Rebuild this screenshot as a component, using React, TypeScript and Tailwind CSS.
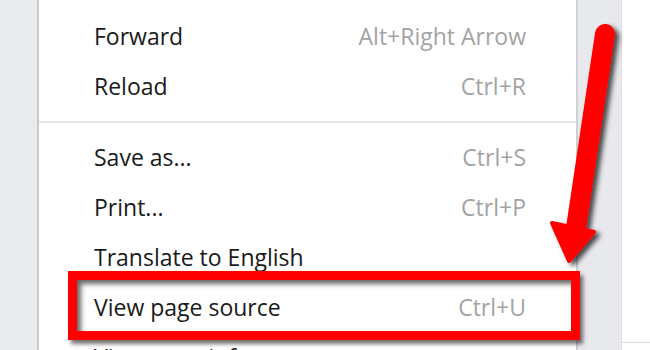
import React from 'react';

const items = [
  { label: 'Forward', shortcut: 'Alt+Right Arrow' },
  { label: 'Reload', shortcut: 'Ctrl+R' },
  { sep: true },
  { label: 'Save as...', shortcut: 'Ctrl+S' },
  { label: 'Print...', shortcut: 'Ctrl+P' },
  { label: 'Translate to English', shortcut: '' },
  { label: 'View page source', shortcut: 'Ctrl+U' },
  { label: 'View page info', shortcut: '' },
];

const App = () => {
  return (
    <div
      className="relative w-[650px] h-[350px] overflow-hidden flex bg-white"
      style={{ fontFamily: '"Open Sans", "Noto Sans", sans-serif' }}
    >
      {/* page behind the menu, left side */}
      <div className="w-[39px] shrink-0 bg-[#e9eaee] border-r-2 border-[#c9c9cc]" />

      {/* context menu */}
      <div className="w-[539px] shrink-0 bg-white border-r-2 border-[#cfd0d3] pt-[11px]">
        {items.map((item, i) =>
          item.sep ? (
            <div key={i} className="h-[21px] flex items-center">
              <div className="w-full h-[2px] bg-[#e6e6e6]" />
            </div>
          ) : (
            <div key={i} className="h-[50px] flex items-center justify-between pl-[55px] pr-[50px] text-[23px]">
              <span className="text-[#1a1a1a]">{item.label}</span>
              <span className="text-[#a3a3a3]">{item.shortcut}</span>
            </div>
          )
        )}
      </div>

      {/* page behind the menu, right side */}
      <div className="w-[44px] shrink-0 bg-[#e8e9ed] border-r border-[#dcdde0]" />
      <div className="flex-1 flex flex-col bg-white">
        <div className="h-[342px]" />
        <div className="h-px bg-[#dcdde0]" />
      </div>

      {/* highlight box */}
      <div className="absolute left-[68px] top-[271px] w-[512px] h-[69px] border-[9px] border-[#ff0000] shadow-[3px_4px_4px_rgba(0,0,0,0.55),inset_4px_4px_5px_rgba(0,0,0,0.6)]" />

      {/* arrow */}
      <svg className="absolute left-0 top-0" width="650" height="350" viewBox="0 0 650 350">
        <defs>
          <filter id="sh" x="-50%" y="-20%" width="200%" height="140%">
            <feDropShadow dx="4" dy="3" stdDeviation="2.5" floodColor="#000" floodOpacity="0.7" />
          </filter>
        </defs>
        <g filter="url(#sh)" fill="#ff0000" stroke="#ff0000">
          <line x1="605" y1="34" x2="576" y2="228" strokeWidth="20" strokeLinecap="round" />
          <path d="M552 223 L594 232 L569 261 Z" strokeWidth="4" strokeLinejoin="round" />
        </g>
      </svg>
    </div>
  );
};

export default App;
